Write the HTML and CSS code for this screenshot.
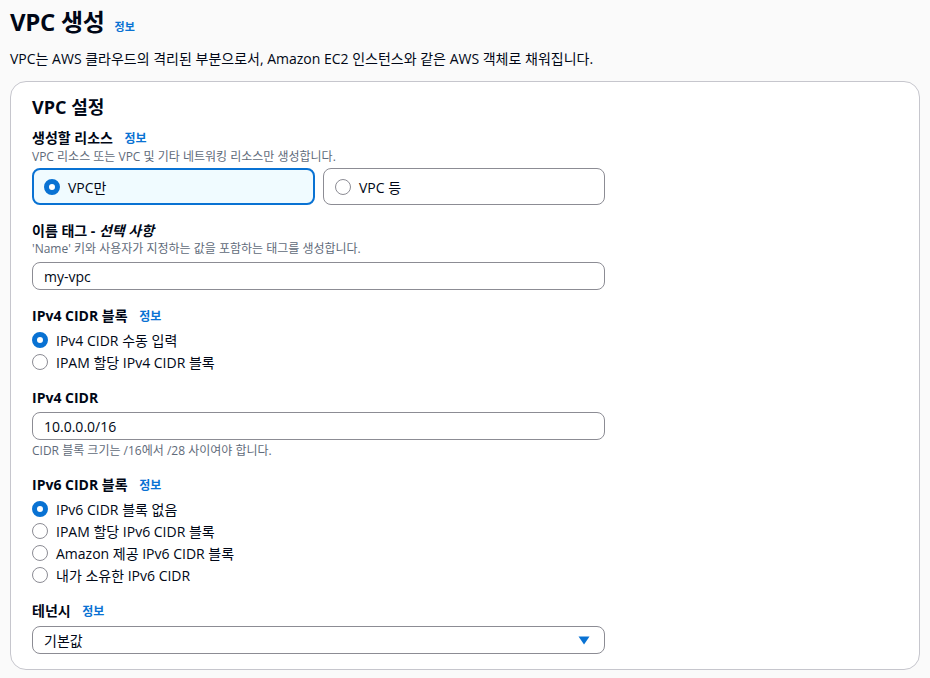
FILE: index.html
```html
<!DOCTYPE html>
<html lang="ko">
<head>
<meta charset="utf-8">
<title>VPC 생성</title>
<link rel="stylesheet" href="styles.css">
</head>
<body>
<div class="page">
  <div class="header">
    <h1 class="title">VPC 생성</h1>
    <a class="info info-title">정보</a>
  </div>
  <p class="intro">VPC는 AWS 클라우드의 격리된 부분으로서, Amazon EC2 인스턴스와 같은 AWS 객체로 채워집니다.</p>

  <div class="card">
    <h2 class="card-title">VPC 설정</h2>
    <div class="form">
      <div class="field field-first">
        <div class="label">생성할 리소스 <a class="info">정보</a></div>
        <div class="desc">VPC 리소스 또는 VPC 및 기타 네트워킹 리소스만 생성합니다.</div>
        <div class="tiles">
          <div class="tile tile-on"><span class="radio on"></span><span>VPC만</span></div>
          <div class="tile"><span class="radio"></span><span>VPC 등</span></div>
        </div>
      </div>

      <div class="field">
        <div class="label">이름 태그 - <em>선택 사항</em></div>
        <div class="desc">'Name' 키와 사용자가 지정하는 값을 포함하는 태그를 생성합니다.</div>
        <div class="input">my-vpc</div>
      </div>

      <div class="field">
        <div class="label">IPv4 CIDR 블록 <a class="info">정보</a></div>
        <div class="radios">
          <div class="opt"><span class="radio on"></span>IPv4 CIDR 수동 입력</div>
          <div class="opt"><span class="radio"></span>IPAM 할당 IPv4 CIDR 블록</div>
        </div>
      </div>

      <div class="field field-tight">
        <div class="label">IPv4 CIDR</div>
        <div class="input input-gap">10.0.0.0/16</div>
        <div class="hint">CIDR 블록 크기는 /16에서 /28 사이여야 합니다.</div>
      </div>

      <div class="field">
        <div class="label">IPv6 CIDR 블록 <a class="info">정보</a></div>
        <div class="radios">
          <div class="opt"><span class="radio on"></span>IPv6 CIDR 블록 없음</div>
          <div class="opt"><span class="radio"></span>IPAM 할당 IPv6 CIDR 블록</div>
          <div class="opt"><span class="radio"></span>Amazon 제공 IPv6 CIDR 블록</div>
          <div class="opt"><span class="radio"></span>내가 소유한 IPv6 CIDR</div>
        </div>
      </div>

      <div class="field field-tight">
        <div class="label">테넌시 <a class="info">정보</a></div>
        <div class="input input-gap select">
          <span>기본값</span>
          <svg class="caret" width="12" height="9" viewBox="0 0 12 9"><polygon points="0.5,0.5 11.5,0.5 6,8.5" fill="#0972d3"/></svg>
        </div>
      </div>
    </div>
  </div>
</div>
</body>
</html>
```

FILE: styles.css
```css
* { box-sizing: border-box; }
html, body { margin: 0; padding: 0; }
body {
  background: #fafafa;
  color: #000716;
  font-family: "Open Sans", "Noto Sans CJK KR", sans-serif;
  font-size: 14px;
}
.page { padding: 7px 10px 0 10px; }
.header { display: flex; align-items: baseline; }
.title {
  margin: 0;
  font-size: 24px;
  line-height: 30px;
  font-weight: 700;
  letter-spacing: -0.3px;
}
.info {
  color: #0972d3;
  font-size: 12px;
  font-weight: 700;
  margin-left: 8px;
  cursor: pointer;
}
.info-title { margin-left: 10px; font-size: 11px; }
.intro {
  margin: 12px 0 0 0;
  font-size: 14px;
  line-height: 20px;
}
.card {
  margin-top: 12px;
  background: #ffffff;
  border: 1px solid #c6c6cd;
  border-radius: 16px;
  padding: 13px 21px 15px 21px;
  height: 589px;
}
.card-title {
  margin: 0;
  font-size: 18px;
  line-height: 24px;
  font-weight: 700;
}
.form { width: 573px; }
.field { margin-top: 16px; }
.field-first { margin-top: 9px; }
.field-tight { margin-top: 15px; }
.label {
  font-size: 14px;
  line-height: 20px;
  font-weight: 700;
}
.label em { font-style: italic; }
.desc, .hint {
  font-size: 12px;
  line-height: 16px;
  color: #5f6b7a;
}
.hint { margin-top: 3px; }
.tiles {
  display: flex;
  gap: 8px;
  margin-top: 3px;
}
.tile {
  flex: 1;
  height: 37px;
  display: flex;
  align-items: center;
  gap: 8px;
  padding-left: 11px;
  border: 1px solid #8c8c94;
  border-radius: 8px;
  background: #ffffff;
  font-size: 14px;
}
.tile-on {
  border: 2px solid #0972d3;
  background: #f0fbff;
  padding-left: 10px;
}
.radio {
  display: inline-block;
  width: 16px;
  height: 16px;
  border-radius: 50%;
  border: 1.5px solid #8c8c94;
  background: #fff;
  flex: none;
}
.radio.on {
  border: 5px solid #0972d3;
}
.input {
  margin-top: 5px;
  height: 28px;
  border: 1px solid #8c8c94;
  border-radius: 8px;
  padding: 0 11px;
  display: flex;
  align-items: center;
  font-size: 14px;
  background: #fff;
}
.input-gap { margin-top: 4px; }
.select { justify-content: space-between; padding-right: 14px; }
.caret { display: block; }
.radios { margin-top: 2px; }
.opt {
  display: flex;
  align-items: center;
  gap: 8px;
  height: 22px;
  font-size: 14px;
}
```
